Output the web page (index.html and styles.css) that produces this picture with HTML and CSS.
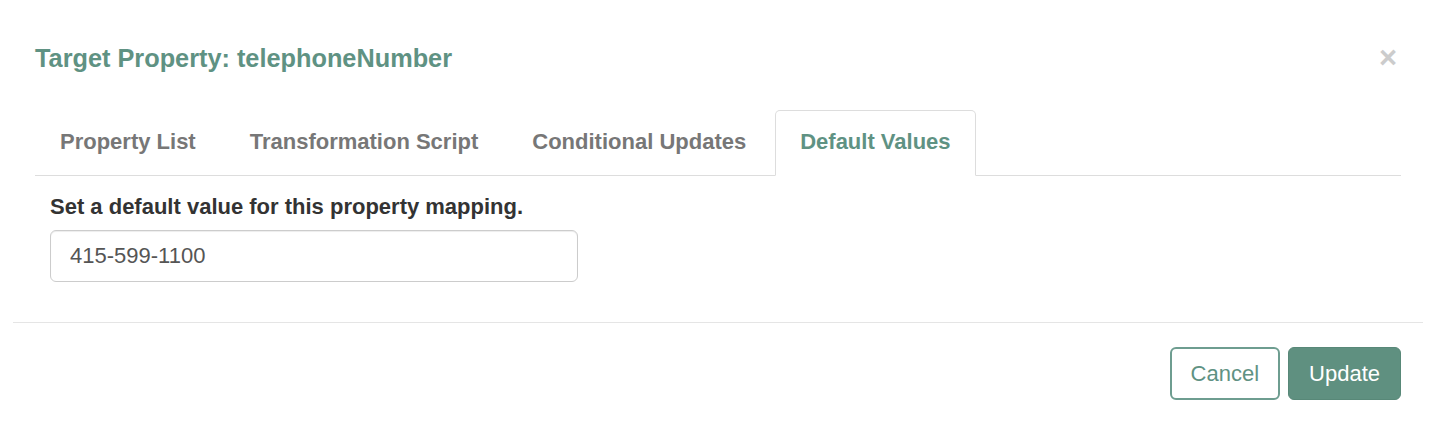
FILE: index.html
```html
<!DOCTYPE html>
<html>
<head>
<meta charset="utf-8">
<link rel="stylesheet" href="styles.css">
</head>
<body>
<div class="modal">
  <div class="modal-header">
    <h4 class="modal-title">Target Property: telephoneNumber</h4>
    <button class="close" type="button">×</button>
  </div>
  <div class="modal-body">
    <ul class="tabs">
      <li class="tab">Property List</li>
      <li class="tab">Transformation Script</li>
      <li class="tab">Conditional Updates</li>
      <li class="tab active">Default Values</li>
    </ul>
    <div class="pane">
      <label class="label">Set a default value for this property mapping.</label>
      <input class="input" type="text" value="415-599-1100">
    </div>
  </div>
  <div class="modal-footer">
    <button class="btn btn-default" type="button">Cancel</button>
    <button class="btn btn-primary" type="button">Update</button>
  </div>
</div>
</body>
</html>
```
FILE: styles.css
```css
html, body {
  margin: 0;
  padding: 0;
  background: #ffffff;
}
body {
  padding: 16px 21px 17px 13px;
  font-family: "Liberation Sans", Arial, Helvetica, sans-serif;
  color: #333;
}
.modal {
  background: #fff;
  border-radius: 6px;
  height: 405px;
  display: flex;
  flex-direction: column;
}
.modal-header {
  display: flex;
  align-items: flex-start;
  justify-content: space-between;
  padding: 22px 22px 0 22px;
  height: 72px;
  box-sizing: border-box;
}
.modal-title {
  margin: 0;
  font-size: 25.3px;
  font-weight: bold;
  line-height: 40px;
  color: #5f9283;
}
.close {
  background: none;
  border: 0;
  padding: 0;
  margin: 0 4px 0 0;
  font-family: "Liberation Sans", Arial, sans-serif;
  font-size: 31px;
  font-weight: bold;
  line-height: 40px;
  color: #cccccc;
}
.modal-body {
  padding: 22px 22px 0 22px;
  height: 235px;
  box-sizing: border-box;
  border-bottom: 1px solid #e5e5e5;
}
.tabs {
  list-style: none;
  margin: 0;
  padding: 0;
  display: flex;
  border-bottom: 1px solid #dddddd;
}
.tab {
  padding: 0 24px;
  margin-right: 4px;
  margin-bottom: -1px;
  height: 64px;
  line-height: 62px;
  border: 1px solid transparent;
  border-radius: 5px 5px 0 0;
  font-size: 22px;
  font-weight: bold;
  color: #777777;
}
.tab.active {
  color: #5f9283;
  background: #fff;
  border-color: #dddddd;
  border-bottom-color: transparent;
}
.pane {
  padding: 0 0 0 15px;
  display: flex;
  flex-direction: column;
  align-items: flex-start;
}
.label {
  font-size: 22px;
  font-weight: bold;
  line-height: 30px;
  margin-top: 16px;
  color: #333;
}
.input {
  margin-top: 8px;
  width: 528px;
  height: 52px;
  box-sizing: border-box;
  border: 1px solid #cccccc;
  border-radius: 6px;
  padding: 0 19px;
  font-family: "Liberation Sans", Arial, sans-serif;
  font-size: 22px;
  color: #555555;
  box-shadow: inset 0 1px 1px rgba(0,0,0,0.075);
}
.modal-footer {
  display: flex;
  justify-content: flex-end;
  gap: 8px;
  padding: 24px 22px 0 22px;
}
.btn {
  height: 53px;
  border-radius: 6px;
  font-family: "Liberation Sans", Arial, sans-serif;
  font-size: 22px;
  line-height: 30px;
  cursor: pointer;
}
.btn-default {
  padding: 0 19px;
  background: #fff;
  color: #5f9283;
  border: 2px solid #6e9d90;
}
.btn-primary {
  padding: 0 20px;
  background: #5f9080;
  color: #fff;
  border: 1px solid #588878;
}
```
